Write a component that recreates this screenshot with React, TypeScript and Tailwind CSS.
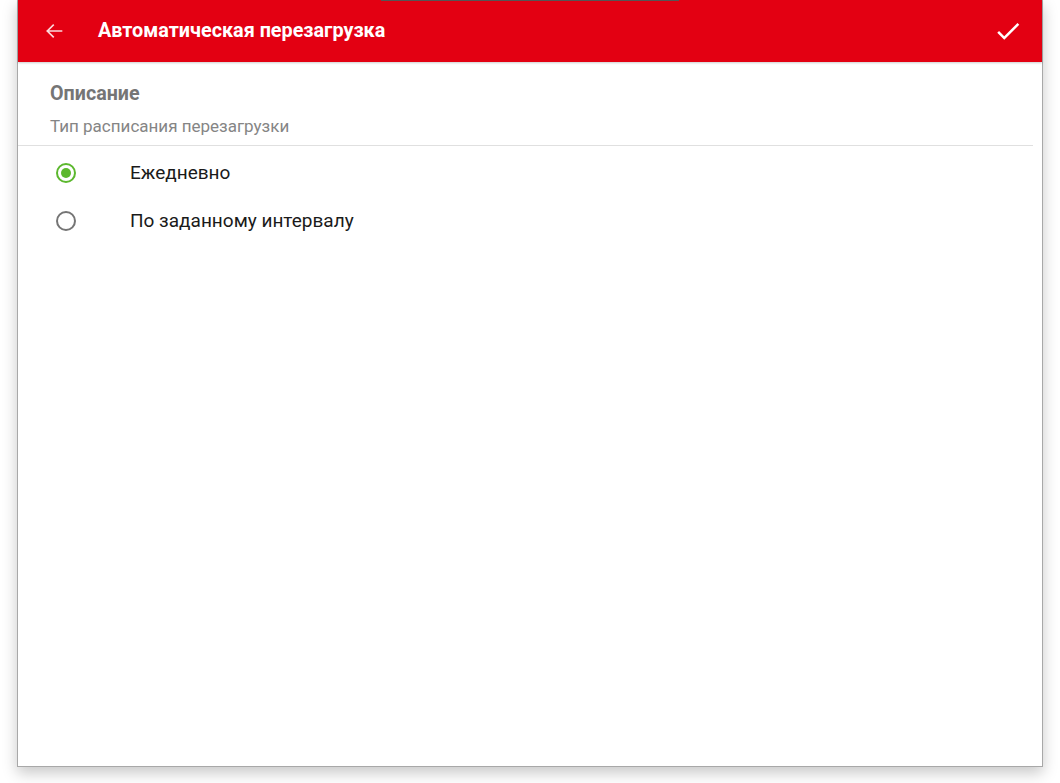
import React from "react";

export default function App() {
  return (
    <div
      className="relative w-[1060px] h-[783px] bg-white overflow-hidden"
      style={{ fontFamily: "Roboto, 'Noto Sans', Arial, sans-serif" }}
    >
      <div className="absolute left-[17px] top-0 w-[1026px] h-[767px] border border-t-0 border-[#a8a8a8] bg-white shadow-[0_6px_14px_rgba(0,0,0,0.22)] flex flex-col">
        <header className="relative h-[62px] bg-[#e30012] flex items-center shrink-0 shadow-[0_1px_2px_rgba(0,0,0,0.2)]">
          <div className="absolute left-[363px] top-0 w-[298px] h-px bg-[#555555]" />
          <div className="w-[80px] flex pl-[26px]">
            <svg width="20" height="20" viewBox="0 0 24 24" fill="none" stroke="white" strokeOpacity="0.85" strokeWidth="2">
              <path d="M21 12H4M11 5l-7 7 7 7" strokeLinecap="square" />
            </svg>
          </div>
          <div className="text-white text-[19.8px] font-bold">Автоматическая перезагрузка</div>
          <div className="ml-auto mr-[19px]">
            <svg width="30" height="30" viewBox="0 0 24 24" fill="white">
              <path d="M9 16.17L4.83 12l-1.42 1.41L9 19 21 7l-1.41-1.41z" />
            </svg>
          </div>
        </header>
        <div className="pl-[32px] pt-[20px]">
          <div className="text-[#757575] text-[19.7px] font-bold leading-[24px]">Описание</div>
          <div className="text-[#858585] text-[17px] leading-[22px] mt-[9px]">Тип расписания перезагрузки</div>
        </div>
        <div className="h-px bg-[#e0e0e0] mt-[8px] mr-[9px]" />
        <div className="flex flex-col">
          <div className="flex items-center h-[52px] mt-[1px]">
            <div className="w-[112px] pl-[38px] flex">
              <div className="w-[20px] h-[20px] rounded-full border-2 border-[#5cb82e] flex items-center justify-center">
                <div className="w-[10px] h-[10px] rounded-full bg-[#5cb82e]" />
              </div>
            </div>
            <div className="text-[19px] text-[#1a1a1a]">Ежедневно</div>
          </div>
          <div className="flex items-center h-[46px] -mt-[1px]">
            <div className="w-[112px] pl-[38px] flex">
              <div className="w-[20px] h-[20px] rounded-full border-2 border-[#757575]" />
            </div>
            <div className="text-[19px] text-[#1a1a1a]">По заданному интервалу</div>
          </div>
        </div>
      </div>
    </div>
  );
}
